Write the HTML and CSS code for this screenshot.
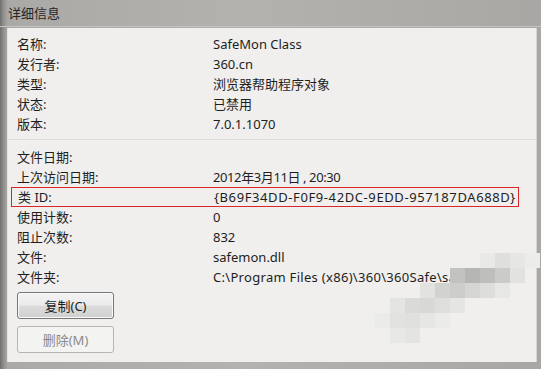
FILE: index.html
```html
<!DOCTYPE html>
<html lang="zh-CN">
<head>
    <meta charset="UTF-8">
    <title>详细信息</title>
    <link rel="stylesheet" href="styles.css">
</head>
<body>
    <div class="window">
        <div class="header">详细信息</div>
        <div class="panel">
            <div class="group">
                <div class="row"><span class="label">名称:</span><span class="value">SafeMon Class</span></div>
                <div class="row"><span class="label">发行者:</span><span class="value">360.cn</span></div>
                <div class="row"><span class="label">类型:</span><span class="value">浏览器帮助程序对象</span></div>
                <div class="row"><span class="label">状态:</span><span class="value">已禁用</span></div>
                <div class="row"><span class="label">版本:</span><span class="value">7.0.1.1070</span></div>
            </div>
            <div class="divider"></div>
            <div class="group">
                <div class="row"><span class="label">文件日期:</span><span class="value"></span></div>
                <div class="row"><span class="label">上次访问日期:</span><span class="value date">2012年3月11日 , 20:30</span></div>
                <div class="row marked"><span class="label">类 ID:</span><span class="value guid">{B69F34DD-F0F9-42DC-9EDD-957187DA688D}</span></div>
                <div class="row"><span class="label">使用计数:</span><span class="value">0</span></div>
                <div class="row"><span class="label">阻止次数:</span><span class="value">832</span></div>
                <div class="row"><span class="label">文件:</span><span class="value">safemon.dll</span></div>
                <div class="row"><span class="label">文件夹:</span><span class="value path">C:\Program Files (x86)\360\360Safe\safemon</span></div>
            </div>
            <div class="buttons">
                <button class="btn">复制(C)</button>
                <button class="btn" disabled>删除(M)</button>
            </div>

            <!-- mosaic blur over the end of the path -->
            <div class="mosaic">
                <i style="left:105px;top:0;background:#e9e9e7"></i>
                <i style="left:120px;top:0;background:#dfdfdd"></i>
                <i style="left:135px;top:0;background:#e6e6e4"></i>
                <i style="left:150px;top:0;background:#ececea"></i>
                <i style="left:75px;top:15px;background:#c2c2c0"></i>
                <i style="left:90px;top:15px;background:#b6b6b4"></i>
                <i style="left:105px;top:15px;background:#bebebc"></i>
                <i style="left:120px;top:15px;background:#cbcbc9"></i>
                <i style="left:135px;top:15px;background:#e2e2e0"></i>
                <i style="left:45px;top:30px;background:#e2e2e0"></i>
                <i style="left:60px;top:30px;background:#d2d2d0"></i>
                <i style="left:75px;top:30px;background:#cdcdcb"></i>
                <i style="left:90px;top:30px;background:#d5d5d3"></i>
                <i style="left:105px;top:30px;background:#dddddb"></i>
                <i style="left:120px;top:30px;background:#e7e7e5"></i>
                <i style="left:15px;top:45px;background:#e4e4e2"></i>
                <i style="left:30px;top:45px;background:#dadad8"></i>
                <i style="left:45px;top:45px;background:#d8d8d6"></i>
                <i style="left:60px;top:45px;background:#dededc"></i>
                <i style="left:75px;top:45px;background:#e5e5e3"></i>
                <i style="left:0;top:60px;background:#ebebe9"></i>
                <i style="left:15px;top:60px;background:#e2e2e0"></i>
                <i style="left:30px;top:60px;background:#e0e0de"></i>
                <i style="left:45px;top:60px;background:#e6e6e4"></i>
                <i style="left:60px;top:60px;background:#ebebe9"></i>
                <i style="left:15px;top:75px;background:#e8e8e6"></i>
                <i style="left:30px;top:75px;background:#e4e4e2"></i>
            </div>
        </div>
    </div>
</body>
</html>
```

FILE: styles.css
```css
body {
    margin: 0;
    background: #a9a8a5;
    font-family: "Noto Sans", "Noto Sans CJK SC", sans-serif;
    font-size: 13px;
    color: #1e1e1e;
}
.window {
    width: 541px;
    height: 369px;
    display: flex;
    flex-direction: column;
    background: linear-gradient(90deg, #6f6f6d 0, #949390 4px, #aaa9a6 8px, #b3b2ae 45%, #a8a7a4 100%);
}
.header {
    height: 26px;
    line-height: 26px;
    padding-left: 8px;
    color: #262626;
    border-bottom: 1px solid #c4c3c0;
}
.panel {
    position: relative;
    height: 334px;
    margin: 1px 4px 0 7px;
    padding: 6px 0 0 9px;
    box-sizing: border-box;
    background: #f0efed;
    border-left: 1px solid #e4e3e0;
    border-right: 1px solid #d6d5d2;
}
.row {
    display: flex;
    height: 20px;
    line-height: 20px;
}
.label {
    width: 196px;
}
.date {
    letter-spacing: -0.4px;
}
.guid {
    letter-spacing: 0.6px;
}
.path {
    letter-spacing: 0.3px;
}
.marked {
    margin-left: -6px;
    padding-left: 6px;
    margin-right: 17px;
    height: 18px;
    line-height: 18px;
    border: 1px solid #d8262b;
    box-sizing: content-box;
}
.divider {
    height: 1px;
    margin: 5px 0 7px -9px;
    background: #dedddb;
}
.buttons {
    display: flex;
    flex-direction: column;
    gap: 7px;
    margin-top: 5px;
}
.btn {
    width: 97px;
    height: 27px;
    font: inherit;
    color: #1e1e1e;
    border: 1px solid #767676;
    border-radius: 3px;
    background: linear-gradient(#f3f3f3 0, #ebebeb 48%, #dcdcdc 52%, #cfcfcf 100%);
    box-shadow: inset 0 0 0 1px #fafafa;
}
.btn:disabled {
    color: #8a8a8a;
    border-color: #b5b5b5;
    background: #f3f3f2;
    box-shadow: none;
}
.mosaic {
    position: absolute;
    left: 367px;
    top: 225px;
}
.mosaic i {
    position: absolute;
    width: 15px;
    height: 15px;
}
```
